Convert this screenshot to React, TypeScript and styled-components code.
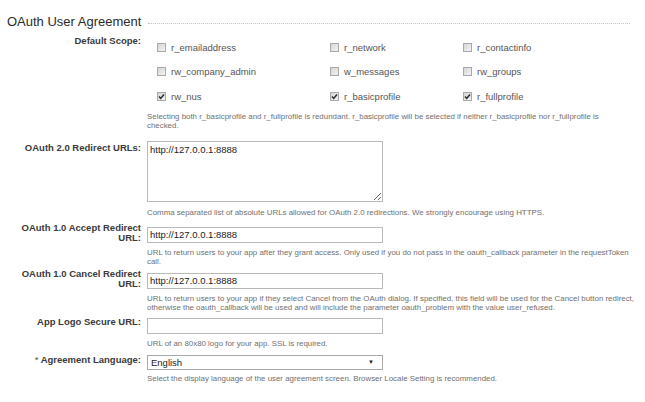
import React from 'react';
import styled, { createGlobalStyle } from 'styled-components';

const GlobalStyle = createGlobalStyle`
  html, body {
    margin: 0;
    padding: 0;
    background: #ffffff;
  }
  body {
    font-family: "Liberation Sans", Arial, sans-serif;
    color: #333333;
  }
`;

interface Scope {
  name: string;
  checked: boolean;
}

const scopes: Scope[] = [
  { name: 'r_emailaddress', checked: false },
  { name: 'r_network', checked: false },
  { name: 'r_contactinfo', checked: false },
  { name: 'rw_company_admin', checked: false },
  { name: 'w_messages', checked: false },
  { name: 'rw_groups', checked: false },
  { name: 'rw_nus', checked: true },
  { name: 'r_basicprofile', checked: true },
  { name: 'r_fullprofile', checked: true },
];

const CheckBox: React.FC<{ checked: boolean }> = ({ checked }) => (
  <BoxIcon width="9" height="9" viewBox="0 0 9 9">
    <defs>
      <linearGradient id={checked ? 'cbOn' : 'cbOff'} x1="0" y1="0" x2="1" y2="1">
        <stop offset="0" stopColor="#d4d4d4" />
        <stop offset="1" stopColor="#f4f4f4" />
      </linearGradient>
    </defs>
    <rect
      x="0.5"
      y="0.5"
      width="8"
      height="8"
      fill={`url(#${checked ? 'cbOn' : 'cbOff'})`}
      stroke="#a9a9a9"
    />
    {checked && (
      <path d="M2 4.6 L3.7 6.4 L7 2.4" fill="none" stroke="#2c2c2c" strokeWidth="1.5" />
    )}
  </BoxIcon>
);

const App: React.FC = () => {
  return (
    <>
      <GlobalStyle />
      <Page>
        <Header>
          <Title>OAuth User Agreement</Title>
          <Dots />
        </Header>

        <Row>
          <Label>Default Scope:</Label>
          <Field>
            <ScopeGrid>
              {scopes.map((s) => (
                <ScopeItem key={s.name}>
                  <CheckBox checked={s.checked} />
                  <span>{s.name}</span>
                </ScopeItem>
              ))}
            </ScopeGrid>
            <Help $top={3}>
              Selecting both r_basicprofile and r_fullprofile is redundant. r_basicprofile will be
              selected if neither r_basicprofile nor r_fullprofile is
              <br />
              checked.
            </Help>
          </Field>
        </Row>

        <Row $top={11}>
          <Label $shift={2}>OAuth 2.0 Redirect URLs:</Label>
          <Field>
            <TextArea readOnly defaultValue="http://127.0.0.1:8888" />
            <Help $top={6}>
              Comma separated list of absolute URLs allowed for OAuth 2.0 redirections. We strongly
              encourage using HTTPS.
            </Help>
          </Field>
        </Row>

        <Row $top={10}>
          <Label $shift={-4}>
            OAuth 1.0 Accept Redirect
            <br />
            URL:
          </Label>
          <Field>
            <TextInput readOnly defaultValue="http://127.0.0.1:8888" />
            <Help $top={5}>
              URL to return users to your app after they grant access. Only used if you do not pass
              in the oauth_callback parameter in the requestToken
              <br />
              call.
            </Help>
          </Field>
        </Row>

        <Row $top={7}>
          <Label $shift={-4}>
            OAuth 1.0 Cancel Redirect
            <br />
            URL:
          </Label>
          <Field>
            <TextInput readOnly defaultValue="http://127.0.0.1:8888" />
            <Help $top={5}>
              URL to return users to your app if they select Cancel from the OAuth dialog. If
              specified, this field will be used for the Cancel button redirect,
              <br />
              otherwise the oauth_callback will be used and will include the parameter
              oauth_problem with the value user_refused.
            </Help>
          </Field>
        </Row>

        <Row $top={6}>
          <Label $shift={-1}>App Logo Secure URL:</Label>
          <Field>
            <TextInput readOnly defaultValue="" />
            <Help $top={5}>URL of an 80x80 logo for your app. SSL is required.</Help>
          </Field>
        </Row>

        <Row $top={7}>
          <Label $shift={0}>
            <Required>*</Required> Agreement Language:
          </Label>
          <Field>
            <SelectBox>
              <span>English</span>
              <Arrow>▼</Arrow>
            </SelectBox>
            <Help $top={4}>
              Select the display language of the user agreement screen. Browser Locale Setting is
              recommended.
            </Help>
          </Field>
        </Row>
      </Page>
    </>
  );
};

const Page = styled.div`
  padding: 14px 7px 0 7px;
  width: 630px;
  box-sizing: border-box;
`;

const Header = styled.div`
  display: flex;
  align-items: center;
  gap: 7px;
  height: 16px;
  width: 623px;
  margin-bottom: 6px;
`;

const Title = styled.h2`
  margin: 0;
  font-size: 13px;
  line-height: 16px;
  font-weight: normal;
  color: #2b2b2b;
  white-space: nowrap;
`;

const Dots = styled.div`
  flex: 1;
  height: 0;
  border-top: 1px dotted #c4c4c4;
  margin-top: 2px;
`;

const Row = styled.div<{ $top?: number }>`
  display: grid;
  grid-template-columns: 134px 1fr;
  column-gap: 6px;
  align-items: start;
  margin-top: ${(p) => p.$top ?? 0}px;
`;

const Label = styled.label<{ $shift?: number }>`
  display: block;
  text-align: right;
  font-size: 9.5px;
  line-height: 10.5px;
  font-weight: bold;
  color: #3a3a3a;
  margin-top: ${(p) => p.$shift ?? 0}px;
`;

const Required = styled.span`
  color: #555555;
  font-weight: normal;
`;

const Field = styled.div`
  display: flex;
  flex-direction: column;
  align-items: flex-start;
  min-width: 0;
`;

const ScopeGrid = styled.div`
  display: grid;
  grid-template-columns: 173px 133px 1fr;
  grid-auto-rows: 24.5px;
  padding-left: 10px;
  margin-top: -1px;
  width: 100%;
  box-sizing: border-box;
`;

const ScopeItem = styled.div`
  display: flex;
  align-items: center;
  gap: 5px;
  font-size: 9.5px;
  color: #555555;
`;

const BoxIcon = styled.svg`
  flex: none;
  display: block;
`;

const Help = styled.div<{ $top?: number }>`
  margin-top: ${(p) => p.$top ?? 0}px;
  white-space: nowrap;
  font-size: 7.9px;
  line-height: 9px;
  color: #707070;
`;

const controlBase = `
  box-sizing: border-box;
  width: 236px;
  border: 1px solid #b9b9b9;
  background: #ffffff;
  font-family: "Liberation Sans", Arial, sans-serif;
  font-size: 9.5px;
  color: #222222;
  margin: 0;
  outline: none;
`;

const TextInput = styled.input`
  ${controlBase}
  height: 16px;
  padding: 0 2px;
`;

const TextArea = styled.textarea`
  ${controlBase}
  display: block;
  height: 61px;
  padding: 2px 2px;
  line-height: 11px;
  resize: vertical;
`;

const SelectBox = styled.div`
  ${controlBase}
  position: relative;
  display: flex;
  align-items: center;
  height: 15px;
  padding: 0 3px;
  border-color: #a9a9a9;
`;

const Arrow = styled.span`
  position: absolute;
  right: 8px;
  top: 50%;
  transform: translateY(-50%);
  font-size: 6px;
  color: #222222;
`;

export default App;
